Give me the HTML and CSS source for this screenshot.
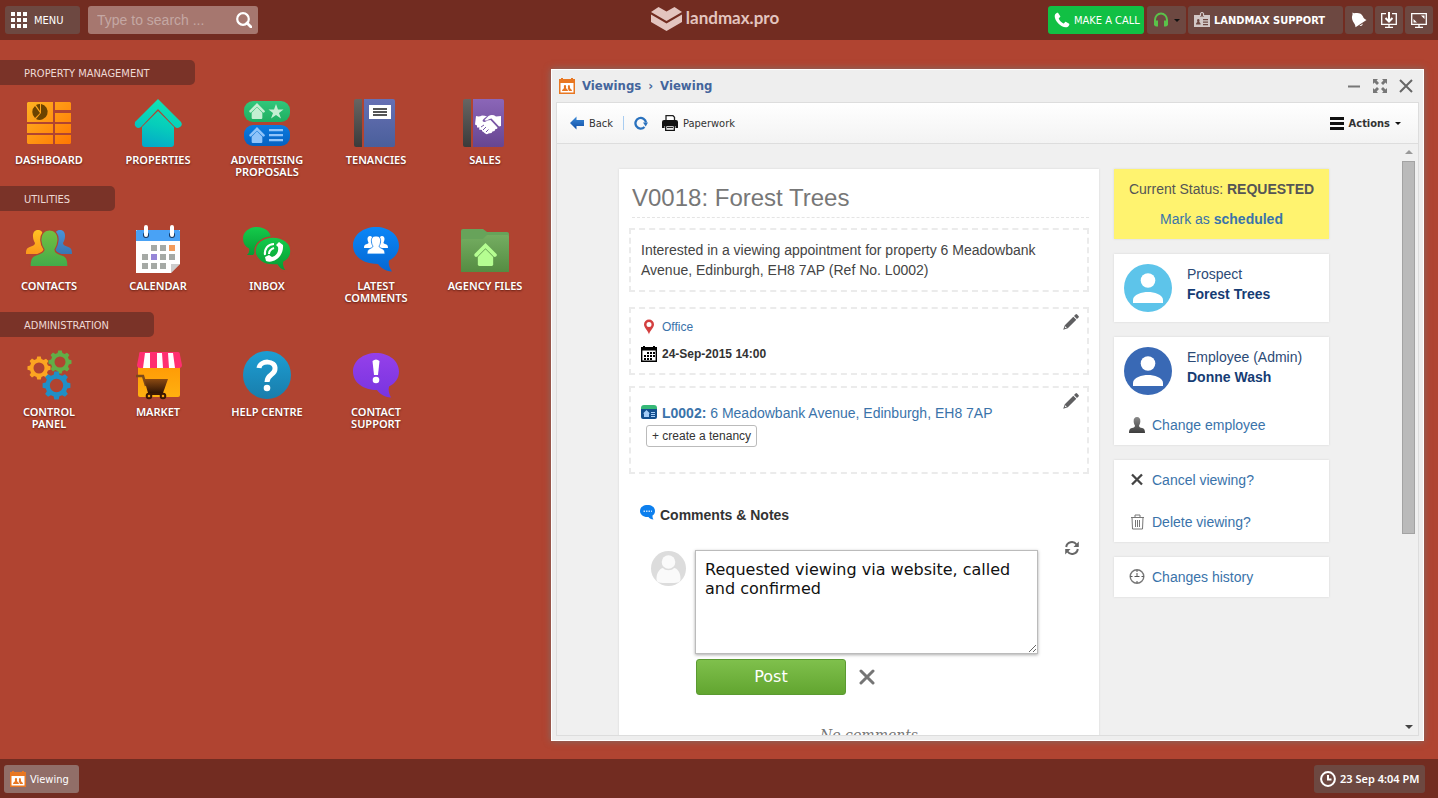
FILE: index.html
```html
<!DOCTYPE html>
<html lang="en">
<head>
<meta charset="utf-8">
<title>landmax.pro</title>
<link rel="stylesheet" href="styles.css">
</head>
<body>
<svg width="0" height="0" class="defs" aria-hidden="true">
  <defs>
    <linearGradient id="g-orange" gradientUnits="userSpaceOnUse" x1="0" y1="0" x2="48" y2="48"><stop offset="0" stop-color="#ffb524"/><stop offset="1" stop-color="#ff7400"/></linearGradient>
    <linearGradient id="g-teal" gradientUnits="userSpaceOnUse" x1="28" y1="4" x2="16" y2="48"><stop offset="0" stop-color="#0fe0b4"/><stop offset=".5" stop-color="#06cdbb"/><stop offset="1" stop-color="#04a9c8"/></linearGradient>
    <linearGradient id="g-green" x1="0" y1="0" x2="0" y2="1"><stop offset="0" stop-color="#31c77b"/><stop offset="1" stop-color="#1fae60"/></linearGradient>
    <linearGradient id="g-blue" x1="0" y1="0" x2="0" y2="1"><stop offset="0" stop-color="#0b7be0"/><stop offset="1" stop-color="#0561c0"/></linearGradient>
    <linearGradient id="g-spine" x1="0" y1="0" x2="0" y2="1"><stop offset="0" stop-color="#676562"/><stop offset="1" stop-color="#3b3b3b"/></linearGradient>
    <linearGradient id="g-book" x1="0" y1="0" x2="0" y2="1"><stop offset="0" stop-color="#6670b4"/><stop offset="1" stop-color="#4a5f9b"/></linearGradient>
    <linearGradient id="g-purple" x1="0" y1="0" x2="0" y2="1"><stop offset="0" stop-color="#8b66b8"/><stop offset="1" stop-color="#674691"/></linearGradient>
    <linearGradient id="g-amber" x1="0" y1="0" x2="0" y2="1"><stop offset="0" stop-color="#ffc423"/><stop offset="1" stop-color="#fb981b"/></linearGradient>
    <linearGradient id="g-leaf" x1="0" y1="0" x2="0" y2="1"><stop offset="0" stop-color="#74c041"/><stop offset="1" stop-color="#42ab4a"/></linearGradient>
    <linearGradient id="g-sky" x1="0" y1="0" x2="0" y2="1"><stop offset="0" stop-color="#4a93d6"/><stop offset="1" stop-color="#3976b4"/></linearGradient>
    <linearGradient id="g-chat" x1="0" y1="0" x2="0" y2="1"><stop offset="0" stop-color="#14cb4b"/><stop offset="1" stop-color="#069b33"/></linearGradient>
    <linearGradient id="g-bubble" x1="0" y1="0" x2="0" y2="1"><stop offset="0" stop-color="#0b86f7"/><stop offset="1" stop-color="#0568d3"/></linearGradient>
    <linearGradient id="g-folder" x1="0" y1="0" x2="0" y2="1"><stop offset="0" stop-color="#74ad61"/><stop offset="1" stop-color="#558c42"/></linearGradient>
    <linearGradient id="g-help" x1="0" y1="0" x2="0" y2="1"><stop offset="0" stop-color="#1d9ed3"/><stop offset="1" stop-color="#197dab"/></linearGradient>
    <linearGradient id="g-violet" x1="0" y1="0" x2="0" y2="1"><stop offset="0" stop-color="#9540ea"/><stop offset="1" stop-color="#7834e0"/></linearGradient>
    <linearGradient id="g-shop" x1="0" y1="0" x2="0" y2="1"><stop offset="0" stop-color="#ff9a05"/><stop offset="1" stop-color="#ffb010"/></linearGradient>
    <linearGradient id="g-cart" x1="0" y1="0" x2="0" y2="1"><stop offset="0" stop-color="#8b4a12"/><stop offset="1" stop-color="#2f1404"/></linearGradient>
    <linearGradient id="g-grey" x1="0" y1="0" x2="0" y2="1"><stop offset="0" stop-color="#8a8a8a"/><stop offset="1" stop-color="#3c3c3c"/></linearGradient>
    <linearGradient id="g-back" x1="0" y1="0" x2="0" y2="1"><stop offset="0" stop-color="#3c8ad8"/><stop offset="1" stop-color="#0f4da4"/></linearGradient>
    <symbol id="house" viewBox="0 0 48 48"><path d="M24 0 47 23q2 3-1 5t-5 0L24 11 7 28q-3 2-5 0t-1-5z"/><path d="M24 13 40 29v16q0 3-3 3H11q-3 0-3-3V29z"/></symbol>
    <symbol id="bust" viewBox="0 0 36 36"><path d="M18 0c5 0 8 4 7.500 10-.3 4-1.500 7-3 9.500 0 3 2.500 4 7 5.500 5 1.500 6.500 4 6.500 11H0c0-7 1.500-9.500 6.500-11 4.500-1.500 7-2.500 7-5.500-1.500-2.500-2.700-5.500-3-9.500C10 4 13 0 18 0z"/></symbol>
    <symbol id="gear" viewBox="-12 -12 24 24"><path fill-rule="evenodd" d="M-1.800-11.500h3.600l.6 2.600 2.300.9L7-9.300 9.400-7 8-4.700l.9 2.300 2.600.6v3.600l-2.600.6L8 4.700 9.400 7 7 9.400 4.700 8l-2.300.9-.6 2.600h-3.600l-.6-2.600L-4.700 8-7 9.400-9.400 7-8 4.700l-.9-2.300-2.600-.6v-3.600l2.600-.6L-8-4.700-9.400-7-7-9.400-4.700-8l2.300-.9zM0-5.500a5.500 5.500 0 1 0 0 11 5.500 5.500 0 1 0 0-11z"/></symbol>
    <symbol id="phone" viewBox="0 0 16 16"><path d="M1.200 2.200C2 1 3.500.4 4 .8l2.300 3.500c.3.700-1.800 1.800-1.500 2.400.9 1.900 2.600 3.700 4.600 4.700.7.300 1.600-2 2.300-1.700l3.500 2.100c.6.600-.5 2.600-1.700 3.200C7.500 17-1.500 7.500 1.200 2.200z"/></symbol>
    <symbol id="person" viewBox="0 0 48 48"><circle cx="24" cy="24" r="24"/><circle cx="24" cy="16.500" r="7.300" fill="#fff"/><path d="M9 39v-3c0-5.500 9-8 15-8s15 2.500 15 8v3z" fill="#fff"/></symbol>
    <symbol id="pencil" viewBox="0 0 16 16"><path d="M12.500.5q.8-.8 1.600 0l1.400 1.400q.8.800 0 1.600L14 5 11 2zM10.300 2.700l3 3-8.500 8.500L.2 15.800l1.600-4.600zM2.400 12.200l-.7 2.100 2.100-.7z" fill-rule="evenodd"/></symbol>
    <symbol id="viewing" viewBox="0 0 16 16"><path d="M0 1h2V0h2v1h8V0h2v1h2v15H0z" fill="#e87722"/><path d="M1.500 5h13v9.500h-13z" fill="#fff"/><path d="M3 13c0-2 2-2 2-3s-.6-3 1-3 1 2 1 3 2 1 2 3zM9 9.500C8.700 8 9 7 10 7s1 2 1 3 2 1 2 3H9.800c0-1.500-1-2-1-2.500z" fill="#e87722"/></symbol>
    <symbol id="clock" viewBox="0 0 16 16"><circle cx="8" cy="8" r="6.900" fill="none" stroke="currentColor" stroke-width="2"/><path d="M8 4v4.500h3.500" fill="none" stroke="currentColor" stroke-width="2"/></symbol>
  </defs>
</svg>

<header class="topbar">
  <div class="topbar-left">
    <button class="bar-btn menu-btn" type="button">
      <svg class="i16" viewBox="0 0 16 16" fill="#fff"><path d="M0 0h4v4H0zM6 0h4v4H6zM12 0h4v4h-4zM0 6h4v4H0zM6 6h4v4H6zM12 6h4v4h-4zM0 12h4v4H0zM6 12h4v4H6zM12 12h4v4h-4z"/></svg>
      <span>MENU</span>
    </button>
    <form class="search" role="search">
      <input type="text" aria-label="Search" placeholder="Type to search ...">
      <button type="button" aria-label="Search"><svg class="i16" viewBox="0 0 16 16" fill="none" stroke="#fff"><circle cx="7" cy="7" r="5.800" stroke-width="2.200"/><path d="m11 11 4 4" stroke-width="2.800" stroke-linecap="round"/></svg></button>
    </form>
  </div>
  <a class="logo" href="#">
    <svg viewBox="0 0 31 24" fill="#e3c4bf"><path d="M0 5 7.500 0l8 4.500L23.500 0 31 5 15.500 14z"/><path d="m0 7.500 15.500 9 15.500-9V15l-15.500 9L0 15z"/></svg>
    <span>landmax.pro</span>
  </a>
  <div class="topbar-right">
    <button class="bar-btn call-btn" type="button"><svg class="i16" fill="#fff"><use href="#phone"/></svg><span>MAKE A CALL</span></button>
    <button class="bar-btn phones-btn" type="button" aria-label="Headset"><svg class="i16" viewBox="0 0 16 16"><path d="M2 13V8a6 6.500 0 0 1 12 0v5" fill="none" stroke="#5bc24a" stroke-width="2"/><path d="M2 8.500h3v6H3Q1 14 1 12zM14 8.500h-3v6h2q2-.5 2-2.500z" fill="#5bc24a"/></svg><i class="caret"></i></button>
    <button class="bar-btn account-btn" type="button"><svg class="i16" viewBox="0 0 16 16"><path d="M0 3h6v1.500h4V3h6v12H0z" fill="#d2c8c6"/><path d="M6.500 4V1.500Q8-.5 9.500 1.500V4" fill="none" stroke="#d2c8c6" stroke-width="1.200"/><path d="M2 12.500c0-2 1-2 1.500-2.500-.8-1.500-.5-3 .8-3s1.600 1.500.8 3c.5.500 1.500.5 1.500 2.500zM9 7h5v1.200H9zM9 9.500h5v1.200H9zM9 12h5v1.200H9z" fill="#6d4841"/></svg><span>LANDMAX SUPPORT</span></button>
    <button class="bar-btn icon-btn" type="button" aria-label="Notifications"><svg class="i16" viewBox="0 0 16 16" fill="#fff"><path d="M1.500.5 3 1.300C7 .3 10.500 1 12 4.500c.6 1.700 1.500 2.700 3.500 3.500L4.500 15.300C4.500 12.500 3 11.500 2 9.500.7 7 .7 4.500 1.500 2.800z"/><path d="M8.500 13.800q2.500 1.200 3.500-2.300z"/></svg></button>
    <button class="bar-btn icon-btn" type="button" aria-label="Download"><svg class="i16" viewBox="0 0 16 16" fill="none" stroke="#fff" stroke-width="1.300"><path d="M5 1.600H.7v10.700h14.600V1.600H11M4 15.300h8M8 12v3"/><path d="M8 0v9M4.500 6 8 9.500 11.500 6" stroke-width="2"/></svg></button>
    <button class="bar-btn icon-btn" type="button" aria-label="Full screen"><svg class="i16" viewBox="0 0 16 16" fill="none" stroke="#fff" stroke-width="1.300"><path d="M.7 1.600h14.600v10.700H.7zM4 15.300h8M8 12v3"/><path d="M13.500 3.500v3.500L10 3.500zM2.500 10.500V7L6 10.500z" fill="#fff" stroke="none"/></svg></button>
  </div>
</header>

<main class="desktop">
  <nav class="launcher">
    <section>
      <h2>PROPERTY MANAGEMENT</h2>
      <div class="tiles">
        <a href="#" class="tile"><svg viewBox="0 0 48 48"><path fill="url(#g-orange)" d="M3 3h25v20H2V4zM30 3h15l1 1v7H30zM30 14h16v9H30zM2 25h26v9H2zM30 25h16v9H30zM2 36h26v9H3l-1-1zM30 36h16v8l-1 1H30z"/><g fill="#6c4300"><path d="M15 5v7l-4-6a8 8 0 0 1 4-1zM10 7l5 7-5 5a8 8 0 0 1 0-12z"/><path d="M16 5a8 8 0 1 1-5 15l5-6z"/></g></svg><span>DASHBOARD</span></a>
        <a href="#" class="tile"><svg viewBox="0 0 48 48"><path fill="url(#g-teal)" d="M24 0 47 23q2 3-1 5t-5 0L24 10 7 28q-3 2-5 0t-1-5z"/><path fill="url(#g-teal)" d="M24 12 40 28v17q0 3-3 3H11q-3 0-3-3V28z"/></svg><span>PROPERTIES</span></a>
        <a href="#" class="tile"><svg viewBox="0 0 48 48"><rect x="1" y="2" width="46" height="21" rx="9" fill="url(#g-green)"/><rect x="1" y="26" width="46" height="21" rx="9" fill="url(#g-blue)"/><use href="#house" x="6" y="4" width="16" height="16" fill="#c4efd2"/><use href="#house" x="6" y="28" width="16" height="16" fill="#8fc4fa"/><path fill="#c4efd2" d="m33 5 2 5.500h5.500L36 14l2 5.500L33 16l-5 3.500 2-5.500-4.500-3.500H31z"/><path fill="#8fc4fa" d="M26 30h14v2.200H26zM26 35h14v2.200H26zM26 40h14v2.200H26z"/></svg><span>ADVERTISING PROPOSALS</span></a>
        <a href="#" class="tile"><svg viewBox="0 0 48 48"><path d="M4 0h6v48H4q-2 0-2-2V2q0-2 2-2z" fill="url(#g-spine)"/><path d="M12 0h29q2 0 2 2v44q0 2-2 2H12z" fill="url(#g-book)"/><path d="M17 6h22v14H17z" fill="#fff"/><path d="M21 9h14v2H21zM21 12h14v2H21zM21 15h14v2H21z" fill="#555"/></svg><span>TENANCIES</span></a>
        <a href="#" class="tile"><svg viewBox="0 0 48 48"><path d="M4 0h6v48H4q-2 0-2-2V2q0-2 2-2z" fill="url(#g-spine)"/><path d="M12 0h29q2 0 2 2v44q0 2-2 2H12z" fill="url(#g-purple)"/><path d="M15 17q3 1 6-.5 3 0 5 1-4 2-4.500 4.500 2 2 5-.5l3-.5 7 7.500q0 2-2 1.500l-1 2-2 .5-1 1.500-3 .5q-2 1.500-4-.5l-1-1q-2-.5-1.500-2l-3-.5.500-2-2.500 0v-2l-2-1zM40 17v10l-2 .5-7.500-8q-2 0-4 1.500-2 1-3 0l4-4q4-2 7.500.5z" fill="#fff"/><path d="M20 28l3-2M22 31l3-3M25 33l2.500-2.500" stroke="#7756a4" fill="none"/></svg><span>SALES</span></a>
      </div>
    </section>
    <section>
      <h2>UTILITIES</h2>
      <div class="tiles">
        <a href="#" class="tile"><svg viewBox="0 0 48 48"><use href="#bust" x="0" y="5" width="26" height="24" fill="url(#g-amber)"/><use href="#bust" x="22" y="5" width="26" height="24" fill="url(#g-sky)"/><path d="M24.500 5c6 0 9 5 8.500 10.500-.3 4-1 6-3 9 0 3 3 4 7 5.500 4.500 1.500 6 4 6 11.500H5C5 34 6.500 31.500 11 30c4-1.500 8-2.500 8-5.500-2-3-3-5-3.200-9C15.500 10 18.500 5 24.500 5z" fill="url(#g-leaf)" stroke="#b04431" stroke-width="1.200"/></svg><span>CONTACTS</span></a>
        <a href="#" class="tile"><svg viewBox="0 0 48 48"><path d="M2 5h44v34l-9 9H2z" fill="#fff"/><path d="M3 5h42l1 1v10H2V6z" fill="#49a2f5"/><path d="M46 39v9h-9z" fill="#b04431"/><path d="M46 39h-9v9z" fill="#ccc"/><path d="M17 20h6v6h-6zM26 20h6v6h-6zM8 29h6v6H8zM26 29h6v6h-6zM35 29h6v6h-6zM8 38h6v6H8zM17 38h6v6h-6zM26 38h6v6h-6z" fill="#a5a9a5"/><path d="M35 20h6v6h-6z" fill="#f39b5b"/><path d="M17 29h6v6h-6z" fill="#9686d8"/><circle cx="12" cy="10" r="3" fill="#17375f"/><circle cx="38" cy="10" r="3" fill="#17375f"/><path d="M12 2v8M38 2v8" stroke="#fff" stroke-width="4" stroke-linecap="round"/></svg><span>CALENDAR</span></a>
        <a href="#" class="tile"><svg viewBox="0 0 48 48"><path d="M14 2c8 0 14 5 14 11.500S22 25 14 25l-4 5H4q3-3 2-6.500C2 21.500 0 18 0 13.500 0 7 6 2 14 2z" fill="url(#g-chat)"/><path d="M30 12c10 0 18 6 18 14 0 5-3 9-7 11-1 4 1 7 3 9-6 0-8-3-10-6h-4c-10 0-18-6-18-14s8-14 18-14z" fill="url(#g-chat)" stroke="#b04431" stroke-width="1.500"/><path d="M36 17l4 3c1 11-9 19-17 16l-1-4 4-2 3 2c4-1 7-5 6-10l-2-2z" fill="#fff"/><path d="M22 30c-1-6 3-11 9-11M26 29c0-3 2-5 5-6" fill="none" stroke="#fff" stroke-width="2"/></svg><span>INBOX</span></a>
        <a href="#" class="tile"><svg viewBox="0 0 48 48"><path d="M24 2c13 0 23 8 23 18.500 0 7-4 12-10 15-1 4 1 8 3 11-7-.5-11-3.500-14-7.500C12 39 1 32 1 20.500 1 10 11 2 24 2z" fill="url(#g-bubble)"/><use href="#bust" x="11" y="11" width="14" height="12" fill="#fff"/><use href="#bust" x="23" y="11" width="14" height="12" fill="#fff"/><path d="M24 11c4 0 5 3 4.500 6-.2 2-.7 3-1.500 4 0 3 6 1 6 8H15c0-7 6-5 6-8-.8-1-1.300-2-1.500-4C19 14 20 11 24 11z" fill="#fff" stroke="#0979e8" stroke-width=".8"/></svg><span>LATEST COMMENTS</span></a>
        <a href="#" class="tile"><svg viewBox="0 0 48 48"><path d="M0 6q0-2 2-2h20l4 3h20q2 0 2 2v10H0z" fill="#67a35a"/><path d="M0 16q0-2 2-2h20l4-4h20q2 0 2 2v35H0z" fill="url(#g-folder)"/><use href="#house" x="13" y="18" width="23" height="23" fill="#b5fd91"/></svg><span>AGENCY FILES</span></a>
      </div>
    </section>
    <section>
      <h2>ADMINISTRATION</h2>
      <div class="tiles">
        <a href="#" class="tile"><svg viewBox="0 0 48 48"><use href="#gear" x="2" y="5" width="24" height="24" fill="#fca521"/><use href="#gear" x="23" y="-1" width="24" height="24" fill="#62ae47"/><use href="#gear" x="17" y="20" width="29" height="29" fill="#208fc6"/></svg><span>CONTROL PANEL</span></a>
        <a href="#" class="tile"><svg viewBox="0 0 48 48"><path d="M4 14h42v30q0 2-2 2H6q-2 0-2-2z" fill="url(#g-shop)"/><path d="M6 1h38q2 0 2 3l2 10q0 3-3 3H6q-3 0-3-3L5 4q0-3 1-3z" fill="#ff2f70"/><path d="M11 2h5v15H9zM23 2h5l1 15h-6zM34 2h5l2 15h-6z" fill="#fff"/><path d="M2 25h7l3 10" stroke="#7d4a1b" stroke-width="2.500" fill="none"/><path d="M10 28h24l-5 14H14z" fill="url(#g-cart)"/><g fill="#fca00a" stroke="#3b1803" stroke-width="2"><path d="M13 43h18"/><circle cx="15" cy="45" r="2.300"/><circle cx="29" cy="45" r="2.300"/></g></svg><span>MARKET</span></a>
        <a href="#" class="tile"><svg viewBox="0 0 48 48"><circle cx="24" cy="24" r="24" fill="url(#g-help)"/><path d="M16 17c1-8 17-8 16 1 0 6-8 5-8 13" fill="none" stroke="#fff" stroke-width="5"/><circle cx="24" cy="37" r="3.300" fill="#fff"/></svg><span>HELP CENTRE</span></a>
        <a href="#" class="tile"><svg viewBox="0 0 48 48"><path d="M24 2c13 0 23 8 23 18.500 0 7-4 12-10 15-1 4 0 7 2 11-7-.5-11-3.500-14-7.500C12 39 1 32 1 20.500 1 10 11 2 24 2z" fill="url(#g-violet)"/><path d="M20.500 10q3.500-3 7 0L26 24h-4z" fill="#fff"/><circle cx="24" cy="29" r="3.300" fill="#fff"/></svg><span>CONTACT SUPPORT</span></a>
      </div>
    </section>
  </nav>

  <section class="window">
    <div class="titlebar">
      <svg class="i16"><use href="#viewing"/></svg>
      <nav class="crumbs"><a href="#">Viewings</a><span>›</span><a href="#">Viewing</a></nav>
      <div class="controls">
        <button type="button" aria-label="Minimise"><svg viewBox="0 0 14 14"><path d="M1 7.500h12" stroke="#777" stroke-width="2"/></svg></button>
        <button type="button" aria-label="Maximise"><svg viewBox="0 0 14 14" fill="#777"><path d="M0 0h5L3.600 1.500 6 4 4 6 1.500 3.600 0 5zM14 0v5l-1.500-1.400L10 6 8 4l2.400-2.500L9 0zM0 14V9l1.500 1.400L4 8l2 2-2.400 2.500L5 14zM14 14H9l1.400-1.500L8 10l2-2 2.500 2.400L14 9z"/></svg></button>
        <button type="button" aria-label="Close"><svg viewBox="0 0 14 14"><path d="m1 1 12 12M13 1 1 13" stroke="#666" stroke-width="2"/></svg></button>
      </div>
    </div>
    <div class="frame">
      <div class="toolbar">
        <button type="button"><svg class="i14" viewBox="0 0 14 14"><path d="M0 7 6.500.5V4H14v6H6.500v3.500z" fill="url(#g-back)"/></svg><span>Back</span></button>
        <i class="rule"></i>
        <button type="button" aria-label="Reload" class="reload"><svg class="i14" viewBox="0 0 14 14"><path d="M10.500 11A5.300 5.300 0 1 1 12 6.500" fill="none" stroke="#2a72be" stroke-width="2.300"/><path d="M9 6.500h5l-2.300 4z" fill="#2a72be"/></svg></button>
        <button type="button"><svg class="i16" viewBox="0 0 16 16"><path d="M4 5V.7h7l1.500 1.500V5" fill="#fff" stroke="#222" stroke-width="1.300"/><path d="M2 5h12q2 0 2 2v6h-2.500v-2h-11v2H0V7q0-2 2-2z" fill="#111"/><path d="M3.700 10.500h8.600v4.800H3.700z" fill="#fff" stroke="#111" stroke-width="1.300"/><path d="M5 12.600h6" stroke="#111"/></svg><span>Paperwork</span></button>
        <button type="button" class="actions"><svg class="i14" viewBox="0 0 14 14"><path d="M0 1h14v3H0zM0 6h14v3H0zM0 11h14v3H0z" fill="#111"/></svg><span>Actions</span><i class="caret"></i></button>
      </div>
      <div class="scroll">
        <div class="content">
          <article class="sheet">
            <h1>V0018: Forest Trees</h1>
            <div class="box note"><p>Interested in a viewing appointment for property 6 Meadowbank Avenue, Edinburgh, EH8 7AP (Ref No. L0002)</p></div>
            <div class="box place">
              <div class="rows">
                <p><svg class="i16" viewBox="0 0 16 16"><path d="M8 15.500C7.500 12 3 9 3 5.500a5 5 0 0 1 10 0C13 9 8.500 12 8 15.500zM8 3a2.500 2.500 0 1 0 0 5 2.500 2.500 0 1 0 0-5z" fill="#d33f3f" fill-rule="evenodd"/></svg><a href="#">Office</a></p>
                <p><svg class="i16" viewBox="0 0 16 16"><path d="M.7 2h14.600v13.300H.7z" fill="#fff" stroke="#000" stroke-width="1.400"/><path d="M0 1h2V0h2v1h8V0h2v1h2v3.500H0zM6 6h2v2H6zM9 6h2v2H9zM12 6h2v2h-2zM3 9h2v2H3zM6 9h2v2H6zM9 9h2v2H9zM12 9h2v2h-2zM3 12h2v2H3zM6 12h2v2H6zM9 12h2v2H9z"/></svg><strong>24-Sep-2015 14:00</strong></p>
              </div>
              <button type="button" class="edit" aria-label="Edit"><svg class="i16" fill="#5f5f61"><use href="#pencil"/></svg></button>
            </div>
            <div class="box listing">
              <div class="rows">
                <p><svg class="i16" viewBox="0 0 16 16"><path d="M0 5V3q0-3 3-3h10q3 0 3 3v2z" fill="#36b877"/><path d="M0 4h16v8q0 2-2 2H2q-2 0-2-2z" fill="#14508f"/><path d="M5.500 5 9 8.500H8V12H3V8.500H2zM10 7h4v1h-4zM10 9h4v1h-4zM10 11h4v1h-4z" fill="#a5cdf7"/></svg><a href="#"><b>L0002:</b> 6 Meadowbank Avenue, Edinburgh, EH8 7AP</a></p>
                <button type="button" class="tenancy">+ create a tenancy</button>
              </div>
              <button type="button" class="edit" aria-label="Edit"><svg class="i16" fill="#5f5f61"><use href="#pencil"/></svg></button>
            </div>
            <h3><svg class="i16" viewBox="0 0 16 16"><path d="M7.500 0C12 0 15 2.500 15 6c0 2-1 3.500-2.500 4.500 0 1.500 0 2.500 1 4-2.500 0-4-1-5-2.500C3.500 12.500 0 9.500 0 6c0-3.500 3-6 7.500-6z" fill="#0c7fee"/><path d="M3.500 5.500h1.500v1.500H3.500zM6 5.500h1.500v1.500H6zM8.500 5.500H10v1.500H8.500zM11 5.500h1v1.500h-1z" fill="#bfe0ff"/></svg>Comments &amp; Notes</h3>
            <form class="comment">
              <svg class="avatar" viewBox="0 0 35 35"><circle cx="17.500" cy="17.500" r="17.500" fill="#dcdcdc"/><circle cx="17.500" cy="11" r="6.800" fill="#fafafa"/><path d="M5.500 28c0-7 4-11 6.500-11 2 3 9 3 11 0 3 0 6.500 4 6.500 11 0 4-3 4-12 4s-12 0-12-4z" fill="#fafafa"/></svg>
              <div class="editor">
                <textarea aria-label="Comment">Requested viewing via website, called and confirmed</textarea>
                <div class="post-row"><button type="button" class="post">Post</button><button type="button" class="cancel" aria-label="Cancel"><svg class="i16" viewBox="0 0 16 16"><path d="m2 2 12 12M14 2 2 14" stroke="#757575" stroke-width="3" stroke-linecap="round"/></svg></button></div>
              </div>
              <button type="button" class="refresh" aria-label="Refresh comments"><svg class="i14" viewBox="0 0 14 14"><path d="M1.200 6A5.700 5.700 0 0 1 11.500 3.500M12.800 8A5.700 5.700 0 0 1 2.500 10.500" fill="none" stroke="#666" stroke-width="2"/><path d="M13.800.5V6H8.500zM.2 13.500V8h5.300z" fill="#666"/></svg></button>
            </form>
            <p class="empty">No comments</p>
          </article>
          <aside class="side">
            <div class="card status"><p>Current Status: <strong>REQUESTED</strong></p><p><a href="#">Mark as <b>scheduled</b></a></p></div>
            <div class="card"><a href="#" class="who"><svg viewBox="0 0 48 48" fill="#5dc4ea"><use href="#person"/></svg><span>Prospect<b>Forest Trees</b></span></a></div>
            <div class="card staff"><a href="#" class="who"><svg viewBox="0 0 48 48" fill="#3969b5"><use href="#person"/></svg><span>Employee (Admin)<b>Donne Wash</b></span></a>
              <a href="#" class="line"><svg class="i16" fill="url(#g-grey)"><use href="#bust"/></svg>Change employee</a></div>
            <div class="card links"><a href="#" class="line"><svg class="i16" viewBox="0 0 16 16"><path d="m3 2.500 10 10M13 2.500l-10 10" stroke="#444" stroke-width="2.300"/></svg>Cancel viewing?</a>
              <a href="#" class="line"><svg class="i16" viewBox="0 0 16 16" fill="none" stroke="#777"><path d="M2 3.500h13M6 3V1h5v2M3 3.500l.5 11.500h10l.5-11.500M6.500 6v7M8.500 6v7M10.500 6v7"/></svg>Delete viewing?</a></div>
            <div class="card"><a href="#" class="line"><svg class="i16" viewBox="0 0 16 16" fill="none" stroke="#777"><circle cx="8" cy="7.500" r="6.800" stroke-width="1.400"/><path d="M8 4v4M5.500 7.500h5M8 1v2M8 12v2M1.500 7.500h2M12.500 7.500h2" stroke="#555"/></svg>Changes history</a></div>
          </aside>
        </div>
        <div class="scrollbar" aria-hidden="true"><i class="up"></i><div class="track"><div class="thumb"></div></div><i class="down"></i></div>
      </div>
    </div>
  </section>
</main>

<footer class="taskbar">
  <button type="button" class="task"><svg class="i16"><use href="#viewing"/></svg><span>Viewing</span></button>
  <div class="time"><svg class="i16"><use href="#clock"/></svg><time>23 Sep 4:04 PM</time></div>
</footer>
</body>
</html>
```
FILE: styles.css
```css
* { box-sizing: border-box; }
html, body { height: 100%; }
body {
  margin: 0;
  display: flex;
  flex-direction: column;
  background: #b04431;
  color: #333;
  font: 11px/16px "DejaVu Sans Condensed", "DejaVu Sans", sans-serif;
  overflow: hidden;
}
button, input, textarea { font: inherit; color: inherit; margin: 0; }
button { border: 0; background: none; padding: 0; cursor: pointer; }
a { text-decoration: none; color: #3a73aa; }
h1, h2, h3, p { margin: 0; }
svg { display: block; flex: none; }
.defs { position: absolute; }
.i16 { width: 16px; height: 16px; }
.i14 { width: 14px; height: 14px; }
.caret { border: 3px solid transparent; border-top-color: #111; border-bottom: 0; }

/* Top bar */
.topbar {
  flex: none;
  height: 40px;
  padding: 0 5px;
  display: grid;
  grid-template-columns: 1fr auto 1fr;
  align-items: center;
  background: #722c21;
  color: #fff;
}
.topbar-left, .topbar-right { display: flex; gap: 8px; }
.topbar-right { justify-content: flex-end; gap: 2px; }
.bar-btn {
  height: 28px;
  padding: 0 6px;
  display: flex;
  align-items: center;
  gap: 6px;
  border-radius: 3px;
  background: #6d4841;
}
.bar-btn span, .toolbar span, .task span { padding-top: 2px; }
.menu-btn { width: 75px; gap: 7px; }
.search {
  display: flex;
  width: 170px;
  height: 28px;
  padding: 0 6px 0 9px;
  align-items: center;
  border-radius: 3px;
  background: #a6776f;
}
.search input {
  flex: 1;
  min-width: 0;
  padding: 0;
  border: 0;
  outline: 0;
  background: none;
  font: 14px/20px "Liberation Sans", Arial, sans-serif;
}
.search input::placeholder { color: #c4a7a3; opacity: 1; }
.logo { display: flex; align-items: center; gap: 4px; padding: 0 8px 2px 0; color: #e3c4bf; font: 700 17px/22px Lato, sans-serif; }
.logo span { padding-bottom: 3px; }
.logo svg { width: 31px; height: 24px; }
.call-btn { width: 96px; background: #11c044; gap: 4px; white-space: nowrap; margin-right: 1px; }
.phones-btn { width: 39px; gap: 5px; }
.account-btn { width: 155px; gap: 4px; font-weight: 700; white-space: nowrap; }

/* Desktop */
.desktop { flex: 1; min-height: 0; display: flex; }
.launcher { flex: none; width: 551px; padding-top: 20px; }
.launcher h2 {
  width: max-content;
  height: 25px;
  padding: 1px 45px 0 24px;
  border-radius: 0 5px 5px 0;
  background: #7a3328;
  color: #eed9d5;
  font-size: 11px;
  line-height: 25px;
  font-weight: 400;
}
.tiles { display: grid; grid-template-columns: repeat(5, 99px); gap: 10px; padding: 14px 0 8px; }
.tile { display: flex; flex-direction: column; align-items: center; gap: 7px; padding-right: 1px; color: #fff; }
.tile svg { width: 48px; height: 48px; overflow: visible; }
.tile span {
  min-height: 24px;
  max-width: 82px;
  font: 600 11px/12px "Noto Sans", sans-serif;
  text-align: center;
  text-shadow: 0 1px 2px #5c1c12;
}

/* Window */
.window {
  flex: 1;
  min-width: 0;
  margin: 29px 14px 18px 0;
  padding: 0 4px 4px;
  display: flex;
  flex-direction: column;
  border: 1px solid #fff;
  background: #eee;
  box-shadow: 0 0 7px #7d6f6a;
}
.titlebar { flex: none; height: 32px; padding: 0 6px 0 3px; display: flex; align-items: center; gap: 7px; }
.crumbs { display: flex; gap: 7px; flex: 1; font-size: 13px; font-weight: 700; }
.crumbs a, .crumbs span { color: #44659c; }
.controls { display: flex; gap: 12px; }
.controls svg { width: 14px; height: 14px; }
.frame { flex: 1; min-height: 0; display: flex; flex-direction: column; border: 1px solid #ddd; background: #f0f0f0; }
.toolbar {
  flex: none;
  height: 41px;
  padding: 0 17px 0 13px;
  display: flex;
  align-items: center;
  border-bottom: 1px solid #ddd;
  background: linear-gradient(#fff, #f3f3f3);
}
.toolbar button { display: flex; align-items: center; gap: 5px; }
.toolbar .rule { width: 1px; height: 14px; margin: 0 10px; background: #a9cdf1; }
.toolbar .reload { margin-right: 14px; }
.toolbar .actions { margin-left: auto; font-weight: 700; }
.scroll { flex: 1; min-height: 0; display: flex; overflow: hidden; }
.content {
  flex: 1;
  min-width: 0;
  padding: 25px 73px 0 62px;
  display: flex;
  align-items: flex-start;
  gap: 15px;
  font: 14px/20px "Liberation Sans", Arial, sans-serif;
}
.scrollbar { flex: none; width: 16px; padding: 6px 3px 6px 0; display: flex; flex-direction: column; align-items: center; gap: 7px; }
.scrollbar i { flex: none; border: 4px solid transparent; }
.scrollbar .up { border-top: 0; border-bottom-color: #999; }
.scrollbar .down { border-bottom: 0; border-top-color: #444; }
.track { flex: 1; width: 100%; }
.thumb { height: 67%; background: #bababa; border: 1px solid #a3a3a3; }

/* Main sheet */
.sheet { flex: 1; min-width: 0; min-height: 640px; padding: 10px; background: #fff; box-shadow: 0 0 2px #d4d4d4; }
.sheet h1 {
  margin: 0 0 10px 3px;
  padding: 4px 0;
  border-bottom: 1px dashed #e4e4e4;
  color: #777;
  font-size: 24px;
  line-height: 30px;
  font-weight: 400;
}
.box { display: flex; justify-content: space-between; border: 2px dashed #ebebeb; padding: 10px; }
.note { color: #444; }
.place { margin-top: 15px; min-height: 68px; padding: 5px 8px 5px 10px; font-size: 12px; }
.listing { margin-top: 11px; min-height: 88px; padding: 5px 8px 5px 10px; }
.rows p { display: flex; align-items: center; gap: 5px; }
.place .rows { display: flex; flex-direction: column; gap: 7px; padding-top: 3px; }
.listing .rows { padding-top: 10px; }
.edit { align-self: flex-start; }
.tenancy {
  margin: 2px 0 0 5px;
  height: 22px;
  padding: 0 5px;
  border: 1px solid #bbb;
  border-radius: 3px;
  background: #fff;
  font-size: 12px;
  line-height: 18px;
}
.sheet h3 { display: flex; align-items: flex-start; gap: 4px; margin: 31px 0 0 11px; font-size: 14px; line-height: 20px; }
.comment { display: flex; margin: 16px 10px 0 22px; }
.avatar { width: 35px; height: 35px; margin: 10px 9px 0 0; }
.editor { flex: 1; margin: 9px 27px 0 0; }
.editor textarea {
  display: block;
  width: 100%;
  height: 104px;
  padding: 9px;
  border: 1px solid #bbb;
  box-shadow: 0 1px 3px #aaa;
  color: #111;
  font: 16px/19px "DejaVu Sans", sans-serif;
  resize: both;
}
.post-row { display: flex; align-items: center; gap: 13px; margin: 5px 0 0 1px; }
.post {
  width: 150px;
  height: 36px;
  border: 1px solid #5b9a31;
  border-radius: 3px;
  background: linear-gradient(#7fc04c, #62a530);
  color: #fff;
  font: 16px/20px "DejaVu Sans", sans-serif;
}
.refresh { align-self: flex-start; }
.empty { margin-top: 29px; padding-left: 20px; text-align: center; color: #777; font: italic 14px/22px "DejaVu Serif", serif; }

/* Side cards */
.side { flex: none; width: 215px; display: flex; flex-direction: column; gap: 15px; }
.card { padding: 10px; background: #fff; box-shadow: 0 0 2px #d4d4d4; }
.status { display: flex; flex-direction: column; gap: 10px; padding: 10px 0; background: #fff36f; text-align: center; color: #555; }
.who { display: flex; gap: 15px; color: #2c4a76; }
.who svg { width: 48px; height: 48px; }
.who b { display: block; color: #163c74; }
.staff, .links { display: flex; flex-direction: column; gap: 20px; }
.links { gap: 22px; }
.line { display: flex; align-items: center; gap: 7px; padding-left: 5px; }

/* Task bar */
.taskbar {
  flex: none;
  height: 39px;
  padding: 0 13px 0 4px;
  display: flex;
  align-items: center;
  justify-content: space-between;
  background: #722c21;
  color: #fff;
}
.task, .time { height: 28px; padding: 0 6px; display: flex; align-items: center; gap: 4px; border-radius: 3px; background: #916e68; }
.task { width: 75px; }
.time { width: 111px; background: #6d4841; font: 600 11px/16px "Noto Sans", sans-serif; white-space: nowrap; }
```
